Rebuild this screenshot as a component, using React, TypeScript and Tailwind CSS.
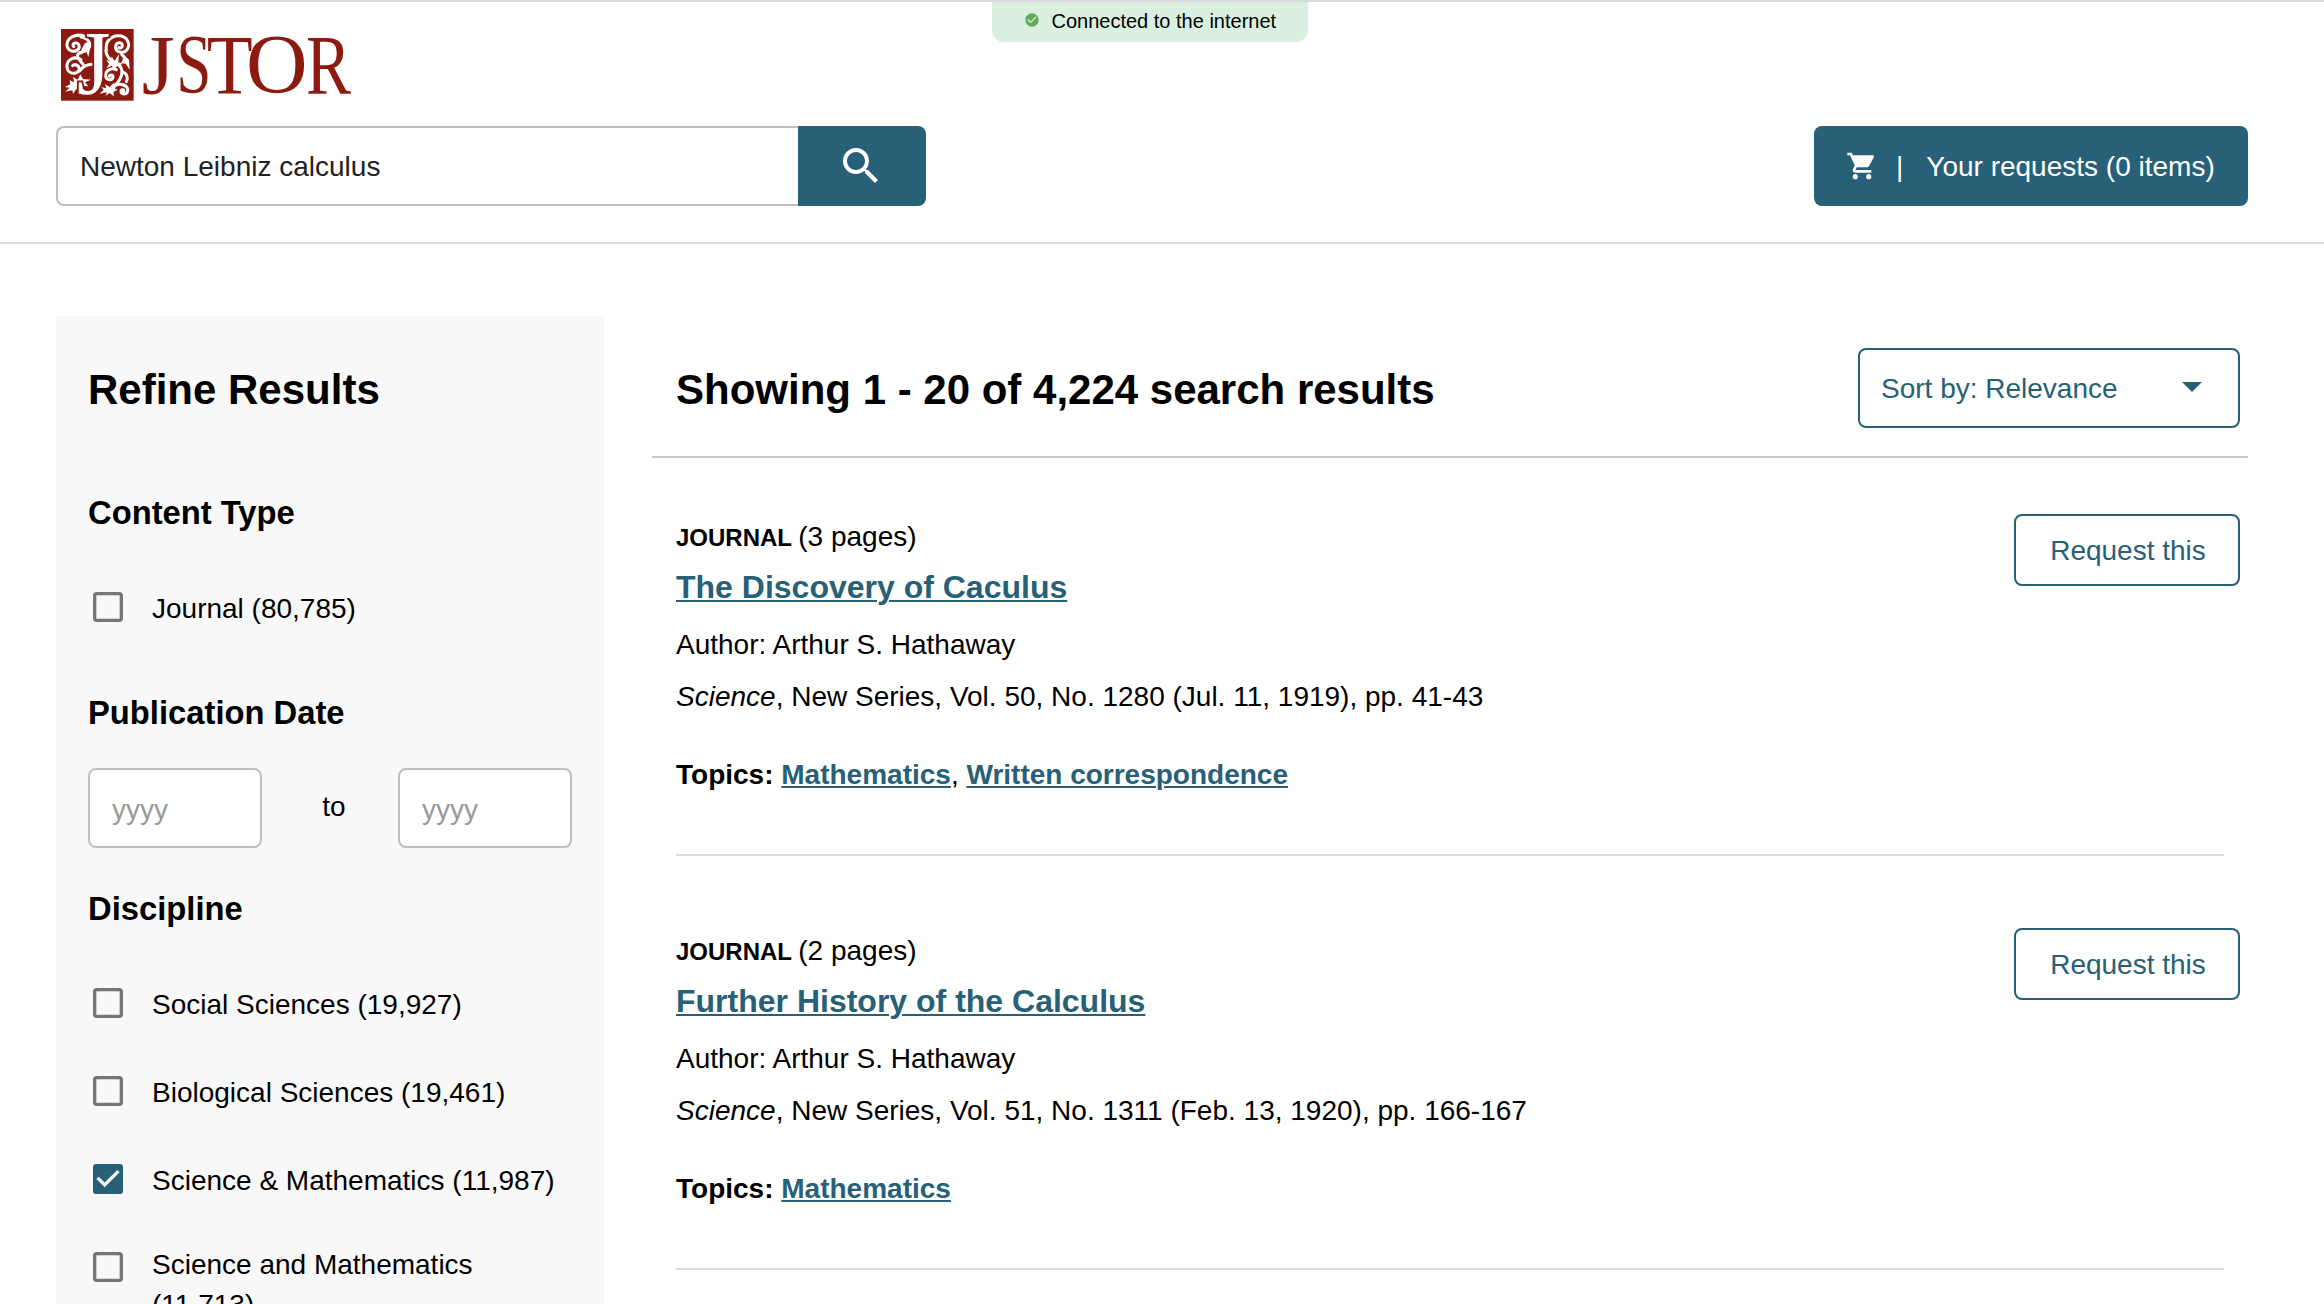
import { MdCheckBox, MdCheckBoxOutlineBlank, MdCheckCircle, MdSearch, MdShoppingCart } from "react-icons/md";

const disciplines = [
  { label: "Social Sciences (19,927)", checked: false },
  { label: "Biological Sciences (19,461)", checked: false },
  { label: "Science & Mathematics (11,987)", checked: true },
];

const results = [
  {
    pages: "(3 pages)",
    title: "The Discovery of Caculus",
    source: ", New Series, Vol. 50, No. 1280 (Jul. 11, 1919), pp. 41-43",
    topics: ["Mathematics", "Written correspondence"],
  },
  {
    pages: "(2 pages)",
    title: "Further History of the Calculus",
    source: ", New Series, Vol. 51, No. 1311 (Feb. 13, 1920), pp. 166-167",
    topics: ["Mathematics"],
  },
];

function Logo() {
  return (
    <svg className="block h-[72px] w-[292px] overflow-visible" viewBox="0 0 876 216" role="img" aria-label="JSTOR">
      <rect x="0" y="0" width="218" height="215" fill="#8b1a10" />
      <g fill="none" stroke="#fff" strokeWidth="9" strokeLinecap="round" strokeLinejoin="round">
        {/* upper left scroll */}
        <path d="M70 22C54 14 22 20 18 44C16 62 34 72 48 64C60 56 54 40 42 42C36 43 34 50 38 53" />
        <path d="M60 24C74 26 84 34 86 46" />
        <path d="M86 44C88 58 78 66 64 68C54 70 48 76 50 84" />
        {/* lower left scroll */}
        <path d="M60 92C42 80 16 90 18 114C20 136 46 138 54 124C58 112 44 102 35 110" />
        <path d="M56 126C66 112 76 106 94 106" />
        <path d="M56 94L66 106" />
        {/* upper right scroll */}
        <path d="M136 64C132 40 148 20 172 20C198 20 210 44 198 62C188 76 162 70 164 52C166 38 184 38 184 50C184 56 178 58 174 56" />
        <path d="M134 64C136 84 150 96 166 104C178 110 186 120 182 136C178 160 162 166 152 184" />
        <path d="M182 76C190 84 196 90 200 100" />
        {/* middle right curl */}
        <path d="M166 122C150 114 132 126 134 142C136 154 154 156 156 144C156 136 146 136 145 142" />
        <path d="M184 130C198 132 202 146 196 158" />
        {/* lower right scroll */}
        <path d="M164 168C178 162 202 168 200 186C198 198 178 198 180 186C182 180 190 182 188 186" />
      </g>
      <g fill="#fff">
        <path d="M72 42L90 38L86 64L82 84L76 66L58 78L62 60Z" />
        <path d="M182 74L204 92L206 122L194 104L180 102L186 90Z" />
        <path d="M136 92L150 98L152 82L160 96L174 76L172 100L186 104L168 112L160 120L152 110L136 118L144 106Z" />
        <path d="M36 144L50 152L58 136L66 150L90 152L72 160L82 172L62 170L56 186L46 180L36 194L34 184L12 188L26 176L12 174L28 166L26 154L40 160Z" />
        <path d="M132 166L146 174L160 160L160 178L170 182L158 188L158 202L146 192L134 200L138 190L116 194L128 182L120 174L136 178Z" />
      </g>
      <g fontFamily="'Liberation Serif', serif">
        <text fill="#fff" stroke="#8b1a10" strokeWidth="12" paintOrder="stroke" fontSize="272" transform="translate(48 196) scale(0.95 1)">J</text>
        <g fill="#8b1a10" fontSize="256">
          <text transform="translate(242 194) scale(0.99 1)">J</text>
          <text transform="translate(346 193) scale(0.74 0.98)">S</text>
          <text transform="translate(437 194) scale(0.88 1)">T</text>
          <text transform="translate(555 193) scale(1 0.98)">O</text>
          <text transform="translate(735 194) scale(0.79 1)">R</text>
        </g>
      </g>
    </svg>
  );
}

function FilterOption({ label, checked }: { label: string; checked: boolean }) {
  return (
    <label className="flex h-10 items-start gap-6">
      {checked ? (
        <MdCheckBox className="size-10 shrink-0 text-[#276077]" />
      ) : (
        <MdCheckBoxOutlineBlank className="size-10 shrink-0 text-[#767676]" />
      )}
      <span className="mt-1.5 leading-[31px] whitespace-nowrap">{label}</span>
    </label>
  );
}

function Sidebar() {
  return (
    <aside className="h-[1100px] w-[548px] shrink-0 bg-[#f8f8f8] px-8 pt-[50px]">
      <h2 className="text-[42px] leading-[47px] font-bold">Refine Results</h2>
      <h3 className="mt-[82px] text-[32.76px] leading-9 font-bold">Content Type</h3>
      <div className="mt-14">
        <FilterOption label="Journal (80,785)" checked={false} />
      </div>
      <h3 className="mt-[68px] text-[32.76px] leading-9 font-bold">Publication Date</h3>
      <div className="mt-[37px] flex items-center justify-between">
        <input
          placeholder="yyyy"
          className="h-20 w-[174px] rounded-lg border-2 border-[#bfbfbf] bg-white px-[22px] pt-[3px] placeholder:text-[#999999]"
        />
        <span className="-mt-1 ml-2 leading-[31px]">to</span>
        <input
          placeholder="yyyy"
          className="h-20 w-[174px] rounded-lg border-2 border-[#bfbfbf] bg-white px-[22px] pt-[3px] placeholder:text-[#999999]"
        />
      </div>
      <h3 className="mt-[43px] text-[32.76px] leading-9 font-bold">Discipline</h3>
      <div className="mt-14 flex flex-col gap-12">
        {disciplines.map((d) => (
          <FilterOption key={d.label} label={d.label} checked={d.checked} />
        ))}
        <label className="flex items-start gap-6">
          <MdCheckBoxOutlineBlank className="size-10 shrink-0 text-[#767676]" />
          <span className="-mt-0.5 leading-10">
            Science and Mathematics
            <br />
            (11,713)
          </span>
        </label>
      </div>
    </aside>
  );
}

function Result({ result }: { result: (typeof results)[number] }) {
  return (
    <article className="flex items-start justify-between pr-2 pl-6">
      <div className="w-0 flex-1">
        <p className="mt-[63px] h-[31px] leading-[31px]">
          <span className="text-[24px] font-bold">JOURNAL </span>
          {result.pages}
        </p>
        <h3 className="mt-[17px] text-[32px] leading-9 font-bold">
          <a className="text-[#276077] underline decoration-2 underline-offset-2">{result.title}</a>
        </h3>
        <p className="mt-6 leading-[31px]">Author: Arthur S. Hathaway</p>
        <p className="mt-[21px] leading-[31px]">
          <em>Science</em>
          {result.source}
        </p>
        <p className="mt-[47px] leading-[31px]">
          <b>Topics:</b>{" "}
          {result.topics.map((topic, i) => (
            <span key={topic}>
              {i > 0 && ", "}
              <a className="font-bold text-[#276077] underline decoration-2 underline-offset-2">{topic}</a>
            </span>
          ))}
        </p>
        <hr className="mt-16 w-[1548px] border-t-2 border-[#dcdcdc]" />
      </div>
      <button className="mt-14 h-[72px] w-[226px] rounded-lg border-2 border-[#276077] pt-px pl-0.5 text-[#276077]">
        Request this
      </button>
    </article>
  );
}

export default function App() {
  return (
    <div className="relative h-[1304px] w-[2324px] overflow-hidden bg-white font-['Liberation_Sans',Arial,sans-serif] text-[28px] text-black">
      <div className="absolute top-0.5 left-[992px] flex h-10 w-[316px] rounded-b-xl bg-[#d9efe0] pl-8 text-[20px]">
        <MdCheckCircle className="mt-[10px] size-4 text-[#63aa57]" />
        <span className="mt-2 ml-[11.5px] leading-[22px] whitespace-nowrap">Connected to the internet</span>
      </div>

      <header className="h-[244px] border-t-2 border-b-2 border-t-[#dadbe0] border-b-[#dcdcdc] pt-[27px] pl-[61px]">
        <Logo />
        <div className="mt-[25px] -ml-[5px] flex h-20 justify-between pr-[76px]">
          <div className="flex">
            <input
              defaultValue="Newton Leibniz calculus"
              className="h-20 w-[742px] rounded-lg rounded-r-none border-2 border-r-0 border-[#bfbfbf] bg-white px-[22px] pt-0.5 text-[#222222]"
            />
            <button className="flex w-32 items-center justify-center rounded-r-lg bg-[#276077] pr-0.5 text-white">
              <MdSearch className="size-12" />
            </button>
          </div>
          <button className="flex w-[434px] items-center rounded-lg bg-[#276077] pl-8 text-white">
            <MdShoppingCart className="size-8" />
            <span className="mt-0.5 ml-[18px]">|</span>
            <span className="mt-0.5 ml-[23px] whitespace-nowrap">Your requests (0 items)</span>
          </button>
        </div>
      </header>

      <div className="flex gap-12 pt-[72px] pl-14">
        <Sidebar />
        <main className="w-[1596px]">
          <div className="flex h-[142px] items-start justify-between border-b-2 border-[#c8c8c8] pr-2 pl-6">
            <h1 className="mt-[50px] text-[42px] leading-[47px] font-bold">Showing 1 - 20 of 4,224 search results</h1>
            <button className="mt-8 flex h-20 w-[382px] items-center justify-between rounded-lg border-2 border-[#276077] pr-9 pl-[21px] text-[#276077]">
              <span className="mt-0.5">Sort by: Relevance</span>
              <svg className="mb-0.5 h-2.5 w-5" viewBox="0 0 20 10">
                <path d="M0 0H20L10 10Z" fill="currentColor" />
              </svg>
            </button>
          </div>
          <div className="flex flex-col gap-4">
            {results.map((r) => (
              <Result key={r.title} result={r} />
            ))}
          </div>
        </main>
      </div>
    </div>
  );
}
